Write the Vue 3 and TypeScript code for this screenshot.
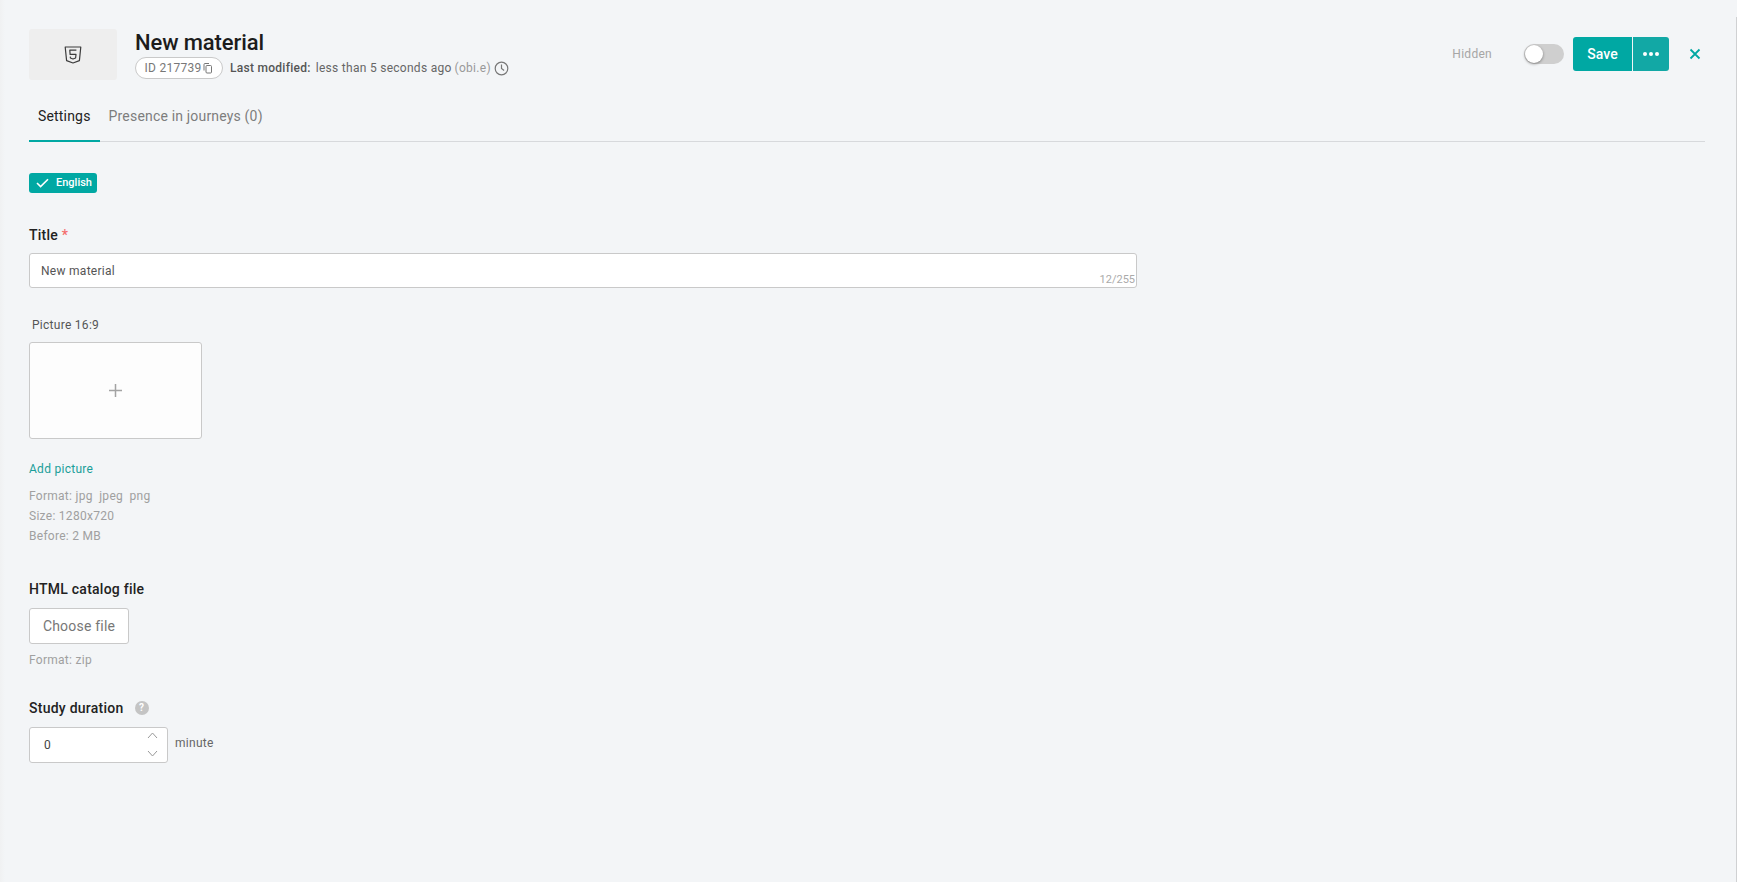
<script setup lang="ts">
const tabs: string[] = ['Settings', 'Presence in journeys (0)']
const hints: string[] = ['Format: jpg  jpeg  png', 'Size: 1280x720', 'Before: 2 MB']
</script>

<template>
  <div class="page">
    <header class="head">
      <div class="thumb">
        <svg width="18" height="20" viewBox="0 0 18 20" fill="none" stroke="#3c3c3c" stroke-width="1.2" stroke-linejoin="round">
          <path d="M1.2 2h15.6l-1.4 13.6L9 18l-6.4-2.4z" />
          <path d="M12.4 5.2H5.8l.3 4.2h5.9l-.4 3.6L9 14l-2.6-1-.1-1.4" />
        </svg>
      </div>
      <div class="headings">
        <h1>New material</h1>
        <div class="meta">
          <span class="chip">ID 217739
            <svg width="10" height="11" viewBox="0 0 10 11" fill="none" stroke="#777" stroke-width="1">
              <rect x="3" y="2.5" width="5.5" height="7.5" rx="1" />
              <path d="M1 7.5V1.5a1 1 0 0 1 1-1h4" />
            </svg>
          </span>
          <b>Last modified:</b>
          <span class="ago">less than 5 seconds ago</span>
          <span class="who">(obi.e)</span>
          <svg class="clock" width="15" height="15" viewBox="0 0 15 15" fill="none" stroke="#777" stroke-width="1.2">
            <circle cx="7.5" cy="7.5" r="6.3" />
            <path d="M7.5 3.6v3.9l2.6 2" />
          </svg>
        </div>
      </div>
      <div class="actions">
        <span class="hidden-label">Hidden</span>
        <span class="toggle"><i></i></span>
        <div class="btn-group">
          <button class="save">Save</button>
          <button class="more"><i></i><i></i><i></i></button>
        </div>
        <svg class="close" width="12" height="12" viewBox="0 0 12 12" stroke="#00a8a3" stroke-width="1.8" fill="none">
          <path d="M1.5 1.5l9 9M10.5 1.5l-9 9" />
        </svg>
      </div>
    </header>

    <nav class="tabs">
      <a v-for="(t, i) in tabs" :key="t" :class="{ active: i === 0 }">{{ t }}</a>
    </nav>

    <div class="lang">
      <svg width="13" height="10" viewBox="0 0 13 10" fill="none" stroke="#fff" stroke-width="1.6">
        <path d="M1 5l3.6 3.6L12 1.2" />
      </svg>
      English
    </div>

    <label class="label title-label">Title <em>*</em></label>
    <div class="input">
      New material
      <span class="count">12/255</span>
    </div>

    <div class="pic-label">Picture 16:9</div>
    <div class="picture">
      <svg width="13" height="13" viewBox="0 0 13 13" stroke="#a3a3a3" stroke-width="1.5"><path d="M6.5 0v13M0 6.5h13" /></svg>
    </div>
    <a class="add">Add picture</a>
    <div class="hints">
      <div v-for="h in hints" :key="h">{{ h }}</div>
    </div>

    <label class="label file-label">HTML catalog file</label>
    <button class="choose">Choose file</button>
    <div class="zip">Format: zip</div>

    <label class="label study">Study duration
      <span class="help">?</span>
    </label>
    <div class="duration">
      <div class="number">
        0
        <span class="steps">
          <svg width="11" height="7" viewBox="0 0 11 7" fill="none" stroke="#999" stroke-width="1"><path d="M1 6l4.5-5L10 6" /></svg>
          <svg width="11" height="7" viewBox="0 0 11 7" fill="none" stroke="#999" stroke-width="1"><path d="M1 1l4.5 5L10 1" /></svg>
        </span>
      </div>
      <span class="unit">minute</span>
    </div>
  </div>
</template>

<style>
html, body { background: #f3f5f7; }
</style>

<style scoped>
.page {
  position: relative;
  box-sizing: border-box;
  height: 882px;
  padding: 29px 32px 0 29px;
  background: linear-gradient(to right, #f0f1f2, #f3f5f7 5px);
  font-family: Roboto, sans-serif;
  font-size: 12px;
  letter-spacing: .28px;
  color: #555;
  overflow: hidden;
}
.page::after {
  content: '';
  position: absolute;
  top: 17px;
  right: 0;
  bottom: 0;
  width: 1px;
  background: #d0d1d3;
}
.head { display: flex; align-items: flex-start; height: 51px; }
.thumb {
  width: 88px; height: 51px; border-radius: 3px; background: #eeeeee;
  display: flex; align-items: center; justify-content: center;
}
.headings { margin-left: 18px; }
h1 { margin: 0; font-size: 22px; line-height: 27px; font-weight: 500; color: #1c1c1c; letter-spacing: -.1px; }
.meta { display: flex; align-items: center; height: 22px; margin-top: 1px; }
.chip {
  box-sizing: border-box; height: 22px; width: 88px; border: 1px solid #c9c9c9; border-radius: 11px;
  background: #fff; display: flex; align-items: center; justify-content: center; gap: 1px;
  color: #777; margin-right: 7px; padding-right: 1px;
}
.meta b { font-weight: 500; color: #555; margin-right: 5px; }
.ago { color: #666; margin-right: 3px; }
.who { color: #999; margin-right: 3px; }
.actions { margin-left: auto; display: flex; align-items: center; height: 34px; margin-top: 8px; }
.hidden-label { color: #a6a6a6; margin-right: 32px; }
.toggle {
  position: relative; width: 40px; height: 20px; border-radius: 10px; background: #cfcfcf; margin-right: 9px;
}
.toggle i {
  position: absolute; left: 1px; top: 1px; width: 18px; height: 18px; border-radius: 50%; background: #fff;
  box-shadow: 0 1px 3px rgba(0,0,0,.4);
}
.btn-group { display: flex; height: 34px; border-radius: 3px; overflow: hidden; }
.btn-group button { border: 0; padding: 0; color: #fff; font-family: inherit; letter-spacing: 0; }
.save { width: 59px; background: #00a8a3; font-size: 14px; font-weight: 500; }
.more {
  width: 36px; margin-left: 1px; background: #12a8a5;
  display: flex; align-items: center; justify-content: center; gap: 2px;
}
.more i { width: 4px; height: 4px; border-radius: 50%; background: #fff; }
.close { margin-left: 20px; margin-right: 4px; }
.tabs { display: flex; height: 50px; margin-top: 12px; border-bottom: 1px solid #d7d9dc; box-sizing: border-box; }
.tabs a {
  box-sizing: border-box; height: 50px; padding: 14px 9px 0; font-size: 14px; line-height: 20px; color: #7d7d7d;
  letter-spacing: .18px;
}
.tabs a.active { color: #222; border-bottom: 2px solid #00a8a3; }
.lang {
  margin-top: 31px; width: 68px; height: 20px; box-sizing: border-box; border-radius: 3px; background: #00a8a3; color: #fff;
  font-size: 11px; font-weight: 500; display: flex; align-items: center; gap: 7px; padding-left: 7px; padding-bottom: 1px;
  letter-spacing: 0;
}
.label { display: block; font-size: 14px; line-height: 18px; font-weight: 500; color: #222; letter-spacing: .25px; }
.title-label { margin-top: 33px; }
.label em { font-style: normal; color: #f56c6c; }
.input {
  position: relative; box-sizing: border-box; margin-top: 9px; width: 1108px; height: 35px; line-height: 35px;
  padding-left: 11px; background: #fff; border: 1px solid #c9c9c9; border-radius: 3px; color: #555;
}
.count { position: absolute; right: 1px; bottom: 0; line-height: 14px; font-size: 11px; color: #aaa; letter-spacing: 0; }
.pic-label { margin-top: 29px; margin-left: 3px; line-height: 16px; color: #555; }
.picture {
  box-sizing: border-box; margin-top: 9px; width: 173px; height: 97px; background: #fdfdfd;
  border: 1px solid #c9c9c9; border-radius: 3px;
  display: flex; align-items: center; justify-content: center;
}
.add { display: block; margin-top: 22px; line-height: 16px; color: #1a9e99; }
.hints { margin-top: 9px; line-height: 20px; color: #a0a0a0; white-space: pre; }
.file-label { margin-top: 34px; }
.choose {
  display: block; box-sizing: border-box; margin-top: 10px; width: 100px; height: 36px; background: #fff;
  border: 1px solid #c9c9c9; border-radius: 3px; font-family: inherit; font-size: 14px; color: #777; padding: 0;
  letter-spacing: .2px;
}
.zip { margin-top: 8px; line-height: 16px; color: #a0a0a0; }
.study { margin-top: 31px; display: flex; align-items: center; }
.help {
  margin-left: 11px; width: 14px; height: 14px; border-radius: 50%; background: #c4c4c4; color: #fff;
  font-size: 10px; font-weight: 700; line-height: 14px; text-align: center; letter-spacing: 0;
}
.duration { display: flex; margin-top: 10px; }
.number {
  position: relative; box-sizing: border-box; width: 139px; height: 36px; line-height: 34px; padding-left: 14px;
  background: #fff; border: 1px solid #c9c9c9; border-radius: 3px; color: #444;
}
.steps {
  position: absolute; right: 9px; top: 4px; height: 25px; display: flex; flex-direction: column; justify-content: space-between;
}
.steps svg { display: block; }
.unit { margin-left: 7px; margin-top: 8px; line-height: 16px; color: #666; }
</style>
